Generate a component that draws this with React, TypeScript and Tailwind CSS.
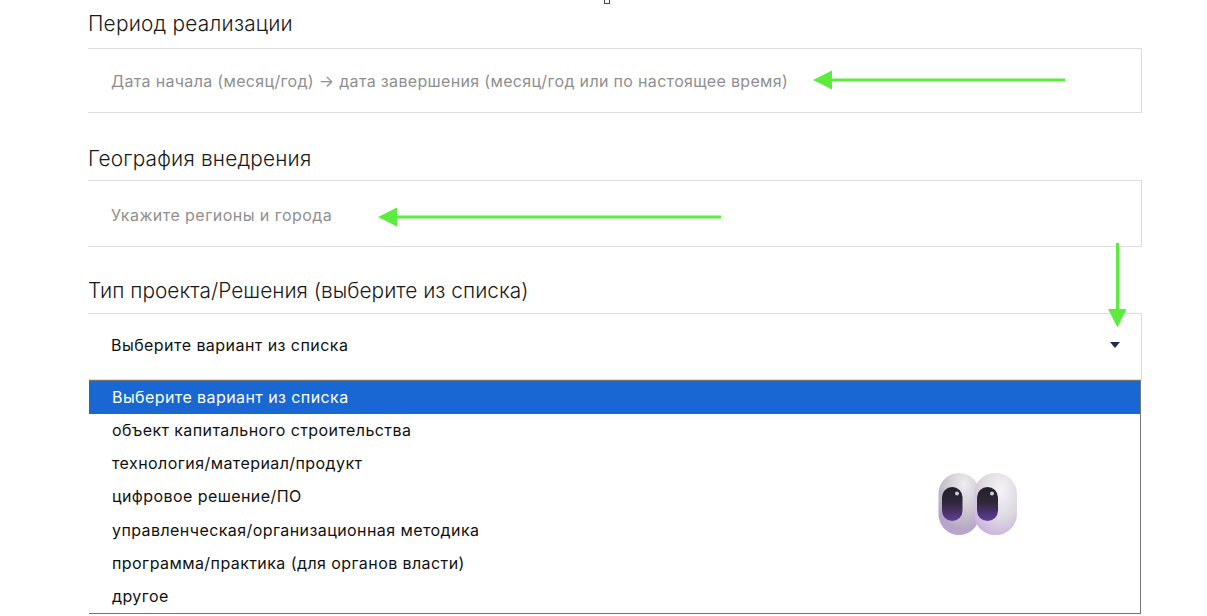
const font = { fontFamily: '"Inter", "Noto Sans", sans-serif' };

const options = [
  "объект капитального строительства",
  "технология/материал/продукт",
  "цифровое решение/ПО",
  "управленческая/организационная методика",
  "программа/практика (для органов власти)",
  "другое",
];

function ArrowLeft({ className, width }: { className: string; width: number }) {
  return (
    <svg className={className} width={width} height={20} viewBox={`0 0 ${width} 20`}>
      <polygon points={`0,10 19,0.5 19,19.5`} fill="#5bec3f" />
      <rect x={18} y={8.5} width={width - 18} height={3} fill="#5bec3f" />
    </svg>
  );
}

function Eyes({ className }: { className: string }) {
  return (
    <svg className={className} width={80} height={64} viewBox="0 0 80 64">
      <defs>
        <radialGradient id="w1" cx="0.62" cy="0.18" r="0.95">
          <stop offset="0" stop-color="#efedf1" />
          <stop offset="0.5" stop-color="#c9c5cd" />
          <stop offset="0.78" stop-color="#b5a6c4" />
          <stop offset="1" stop-color="#c79fe6" />
        </radialGradient>
        <radialGradient id="w2" cx="0.62" cy="0.28" r="0.85">
          <stop offset="0" stop-color="#f6f4f8" />
          <stop offset="0.55" stop-color="#dcd7e0" />
          <stop offset="0.85" stop-color="#cdb8de" />
          <stop offset="1" stop-color="#c9a3e8" />
        </radialGradient>
        <linearGradient id="p" x1="0" y1="0" x2="0" y2="1">
          <stop offset="0" stop-color="#23202a" />
          <stop offset="0.45" stop-color="#2f2739" />
          <stop offset="1" stop-color="#623c98" />
        </linearGradient>
      </defs>
      <rect x={0.5} y={1} width={41} height={62} rx={20.5} fill="url(#w1)" />
      <rect x={4} y={15} width={20.5} height={34} rx={10.25} fill="url(#p)" />
      <circle cx={19} cy={21.5} r={2} fill="#d0cdd3" />
      <rect x={36} y={1} width={43} height={62} rx={21} fill="url(#w2)" />
      <rect x={39} y={15} width={21} height={34} rx={10.5} fill="url(#p)" />
      <circle cx={54} cy={21.5} r={2} fill="#d0cdd3" />
    </svg>
  );
}

export default function App() {
  return (
    <div className="relative h-[616px] w-[1207px] overflow-hidden bg-white" style={font}>
      <div className="absolute left-[604px] top-[-3px] h-[7px] w-[6px] border border-[#444]" />
      <div className="flex w-[1142px] flex-col pl-[88px] pt-[11px]">
        <div className="h-[37px] text-[20.8px] leading-[26px] font-light tracking-[0.23px] text-[#1a1a1a]">Период реализации</div>
        <div className="flex h-[65px] items-center border-y border-r border-[#dcdcdc] pl-[23px] text-[16px] tracking-[0.33px] text-[#8f8f8f]">
          Дата начала (месяц/год) → дата завершения (месяц/год или по настоящее время)
        </div>
        <div className="mt-[33px] h-[34px] text-[20.8px] leading-[26px] font-light tracking-[0.2px] text-[#1a1a1a]">География внедрения</div>
        <div className="flex h-[67px] items-center border-y border-r border-[#dcdcdc] pl-[23px] pt-[2px] text-[16px] tracking-[0.45px] text-[#8f8f8f]">
          Укажите регионы и города
        </div>
        <div className="mt-[31px] h-[35px] text-[20.8px] leading-[26px] font-light tracking-[0.03px] text-[#1a1a1a]">Тип проекта/Решения (выберите из списка)</div>
        <div className="flex h-[67px] items-center justify-between border-y border-r border-[#dcdcdc] pb-[3px] pl-[23px] pr-[21px] text-[16px] tracking-[0.45px] text-[#111]">
          <span>Выберите вариант из списка</span>
          <span className="h-0 w-0 border-x-[5px] border-t-[6px] border-x-transparent border-t-[#1c2b4f]" />
        </div>
        <div className="ml-px mr-px border-y border-r border-[#767676] bg-white text-[16px] tracking-[0.42px] text-[#111]">
          <div className="flex h-[33px] items-center bg-[#1967d2] pb-[1px] pl-[23px] text-white">Выберите вариант из списка</div>
          {options.map((o) => (
            <div key={o} className="flex h-[33.2px] items-center pb-[1px] pl-[23px]">{o}</div>
          ))}
        </div>
      </div>
      <ArrowLeft className="absolute left-[813px] top-[70px]" width={252} />
      <ArrowLeft className="absolute left-[378px] top-[207px]" width={343} />
      <svg className="absolute left-[1108px] top-[243px]" width={19} height={85} viewBox="0 0 19 85">
        <rect x={8} y={0} width={3} height={67} fill="#5bec3f" />
        <polygon points="0,66 18.5,66 9.5,84.5" fill="#5bec3f" />
      </svg>
      <Eyes className="absolute left-[938px] top-[472px]" />
    </div>
  );
}
